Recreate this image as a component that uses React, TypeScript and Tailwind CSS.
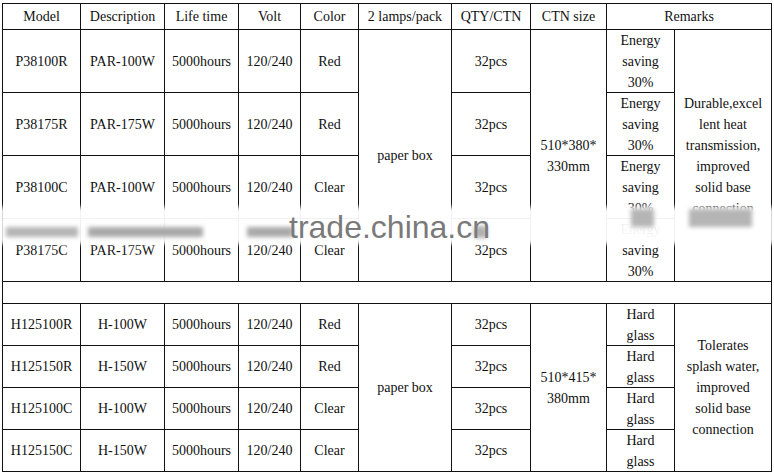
import React from "react";

const serif = { fontFamily: '"Liberation Serif", "Times New Roman", serif' };

const td = "border border-[#111] p-0 text-center align-middle";

function Lines({ items }: { items: string[] }) {
  return (
    <>
      {items.map((t, i) => (
        <span key={i} className="block whitespace-nowrap">
          {t}
        </span>
      ))}
    </>
  );
}

function Tight({ items, h }: { items: string[]; h: string }) {
  return (
    <div className={`${h} flex flex-col justify-center items-center`}>
      {items.map((t, i) => (
        <span key={i} className="block whitespace-nowrap shrink-0">
          {t}
        </span>
      ))}
    </div>
  );
}

const group1 = [
  ["P38100R", "PAR-100W", "Red"],
  ["P38175R", "PAR-175W", "Red"],
  ["P38100C", "PAR-100W", "Clear"],
  ["P38175C", "PAR-175W", "Clear"],
];
const group2 = [
  ["H125100R", "H-100W", "Red"],
  ["H125150R", "H-150W", "Red"],
  ["H125100C", "H-100W", "Clear"],
  ["H125150C", "H-150W", "Clear"],
];

export default function App() {
  return (
    <div className="relative w-[774px] h-[476px] bg-white overflow-hidden" style={serif}>
      <div className="pt-[3px] pl-[2px]">
        <table className="table-fixed border-collapse w-[769px] text-[14px] leading-[21px] text-[#111]">
          <colgroup>
            <col className="w-[78px]" />
            <col className="w-[84px]" />
            <col className="w-[74px]" />
            <col className="w-[62px]" />
            <col className="w-[58px]" />
            <col className="w-[93px]" />
            <col className="w-[79px]" />
            <col className="w-[76px]" />
            <col className="w-[68px]" />
            <col className="w-[97px]" />
          </colgroup>
          <tbody>
            <tr className="h-[26px]">
              <td className={td}>Model</td>
              <td className={td}>Description</td>
              <td className={td}>Life time</td>
              <td className={td}>Volt</td>
              <td className={td}>Color</td>
              <td className={td}>2 lamps/pack</td>
              <td className={td}>QTY/CTN</td>
              <td className={td}>CTN size</td>
              <td className={td} colSpan={2}>
                Remarks
              </td>
            </tr>
            {group1.map((r, i) => (
              <tr key={r[0]} className="h-[63px]">
                <td className={td}>{r[0]}</td>
                <td className={td}>{r[1]}</td>
                <td className={td}>5000hours</td>
                <td className={td}>120/240</td>
                <td className={td}>{r[2]}</td>
                {i === 0 && (
                  <td className={td} rowSpan={4}>
                    paper box
                  </td>
                )}
                <td className={td}>32pcs</td>
                {i === 0 && (
                  <td className={td} rowSpan={4}>
                    <Lines items={["510*380*", "330mm"]} />
                  </td>
                )}
                <td className={td}>
                  <Tight h="h-[40px]" items={["Energy", "saving", "30%"]} />
                </td>
                {i === 0 && (
                  <td className={td} rowSpan={4}>
                    <Lines
                      items={[
                        "Durable,excel",
                        "lent heat",
                        "transmission,",
                        "improved",
                        "solid base",
                        "connection",
                      ]}
                    />
                  </td>
                )}
              </tr>
            ))}
            <tr className="h-[22px]">
              <td className={td} colSpan={10}></td>
            </tr>
            {group2.map((r, i) => (
              <tr key={r[0]} className="h-[42px]">
                <td className={td}>{r[0]}</td>
                <td className={td}>{r[1]}</td>
                <td className={td}>5000hours</td>
                <td className={td}>120/240</td>
                <td className={td}>{r[2]}</td>
                {i === 0 && (
                  <td className={td} rowSpan={4}>
                    paper box
                  </td>
                )}
                <td className={td}>32pcs</td>
                {i === 0 && (
                  <td className={td} rowSpan={4}>
                    <Lines items={["510*415*", "380mm"]} />
                  </td>
                )}
                <td className={td}>
                  <Tight h="h-[30px]" items={["Hard", "glass"]} />
                </td>
                {i === 0 && (
                  <td className={td} rowSpan={4}>
                    <Lines
                      items={[
                        "Tolerates",
                        "splash water,",
                        "improved",
                        "solid base",
                        "connection",
                      ]}
                    />
                  </td>
                )}
              </tr>
            ))}
          </tbody>
        </table>
      </div>

      {/* watermark band */}
      <div className="absolute left-0 top-[207px] w-[774px] h-[37px] bg-white/95 blur-[2px]" />
      <div className="absolute left-[6px] top-[227px] w-[72px] h-[10px] bg-[#b5b5b5] blur-[2px]" />
      <div className="absolute left-[88px] top-[227px] w-[115px] h-[10px] bg-[#a9a9a9] blur-[2px]" />
      <div className="absolute left-[247px] top-[227px] w-[46px] h-[10px] bg-[#a9a9a9] blur-[2px]" />
      <div className="absolute left-[474px] top-[226px] w-[13px] h-[12px] bg-[#b0b0b0] blur-[2px]" />
      <div className="absolute left-[631px] top-[209px] w-[23px] h-[18px] bg-[#b5b5b5] blur-[2px]" />
      <div className="absolute left-[689px] top-[209px] w-[63px] h-[18px] bg-[#b5b5b5] blur-[2px]" />
      <div
        className="absolute left-[289px] top-[211px] text-[32px] leading-[32px] text-[#7a7a7a] whitespace-nowrap"
        style={{ fontFamily: '"Liberation Sans", Arial, sans-serif' }}
      >
        trade.china.cn
      </div>
    </div>
  );
}
